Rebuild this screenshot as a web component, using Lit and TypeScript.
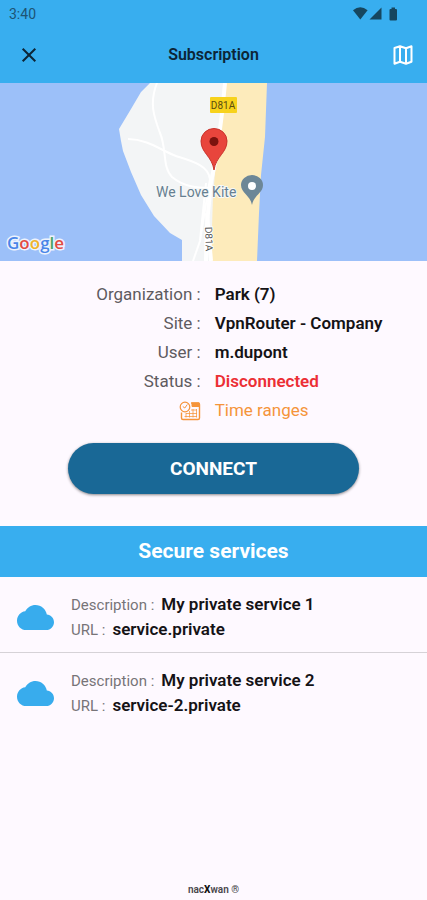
import { LitElement, html, css, svg } from "lit";
import { customElement, property } from "lit/decorators.js";

@customElement("status-bar")
class StatusBar extends LitElement {
  static styles = css`
    :host { display: flex; align-items: center; justify-content: space-between; height: 27px; padding: 0 27px 0 9px; color: #1d5474; font-size: 14px; }
    svg { display: block; width: 48px; height: 16px; }
  `;
  render() {
    return html`<span>3:40</span>
      <svg viewBox="0 0 48 16" fill="#16465f" aria-hidden="true">
        <path d="M1 4.200Q8.300 -1.600 15.600 4.200L8.300 13.600Z" />
        <path d="M29.500 1.600V13.600H17.500Z" />
        <path d="M39.500 1.500h3.500v1.500h1q1 0 1 1v9.500q0 1-1 1h-5.500q-1 0-1-1V4q0-1 1-1h1z" />
      </svg>`;
  }
}

@customElement("site-map")
class SiteMap extends LitElement {
  static styles = css`
    :host { display: block; position: relative; height: 178px; overflow: hidden; background: #9cc0f9; }
    .canvas { display: block; width: 100%; height: 100%; }
    .label { font-family: Roboto, sans-serif; }
    .brand { position: absolute; left: 7px; bottom: 6px; font: 600 17px/24px "Open Sans", sans-serif; paint-order: stroke fill; -webkit-text-stroke: 3px #edf3fd; }
    .b { color: #4a86e8; }
    .r { color: #e34a42; }
    .y { color: #f0b429; }
    .g { color: #4aa564; }
  `;
  render() {
    return html`
      <svg class="canvas" viewBox="0 0 427 178" preserveAspectRatio="xMidYMid slice" role="img" aria-label="Map of the site">
        ${svg`
          <path fill="#f3f5f6" d="M150 0L141 9L131 26L119 46L121 58L123 68L131 89L141 112L154 133L170 150L182 157V178H225V0Z" />
          <path fill="#fdebbb" d="M225 0H267L265 54L261 92L259 130L257 178H211L213 112L216 80L222 40Z" />
          <g fill="none" stroke="#fff">
            <path stroke-width="2" d="M157 0C149 20 154 34 160 50C167 66 162 84 172 94C184 104 198 105 210 105" />
            <path stroke-width="2" d="M128 56C148 56 162 68 176 73C192 78 208 82 210 96M210 96L200 158L193 178M206 100L200 157" />
            <path stroke-width="4" d="M225 0L222 30L217 70L211 99L207 140L206 178" />
            <path stroke-width="4" d="M207 130L211 178" />
          </g>
          <rect x="210" y="14" width="27" height="16" rx="1" fill="#f7d21c" />
          <text class="label" x="223" y="26" text-anchor="middle" font-size="10" fill="#5a4c10">D81A</text>
          <text class="label" x="156" y="114" font-size="14" fill="#657f91" stroke="#f7f8f8" stroke-width="2" paint-order="stroke">We Love Kite</text>
          <text class="label" transform="translate(205 144) rotate(88)" font-size="10" fill="#555" stroke="#fff" stroke-width="2" paint-order="stroke">D81A</text>
          <path fill="#6d8797" d="M252 122C250 112 241 110 241 102A11 10 0 0 1 263 102C263 110 254 112 252 122Z" />
          <circle cx="252" cy="103" r="4" fill="#fff" />
          <path fill="#e8453c" stroke="#c9322b" stroke-width="1" d="M214 87C212 73 201 70 201 58A13 12.500 0 0 1 227 58C227 70 216 73 214 87Z" />
          <circle cx="214" cy="58.500" r="4.500" fill="#7b120e" />
        `}
      </svg>
      <span class="brand"><span class="b">G</span><span class="r">o</span><span class="y">o</span><span class="b">g</span><span class="g">l</span><span class="r">e</span></span>`;
  }
}

@customElement("service-item")
class ServiceItem extends LitElement {
  @property() name = "";
  @property() url = "";
  static styles = css`
    :host { display: flex; align-items: center; gap: 17px; padding: 15px 17px 11px; }
    .cloud { flex: none; width: 37px; height: 25px; }
    dl { margin: 0; }
    .row { display: flex; align-items: baseline; gap: 7px; height: 25px; line-height: 24px; }
    dt { font-size: 15px; color: #777478; }
    dd { margin: 0; font-size: 17px; font-weight: 600; color: #151316; }
  `;
  render() {
    return html`
      <svg class="cloud" viewBox="0 4 24 16" preserveAspectRatio="none" fill="#38aced" aria-hidden="true">
        <path d="M19.350 10.040C18.670 6.590 15.640 4 12 4 9.110 4 6.600 5.640 5.350 8.040 2.340 8.360 0 10.910 0 14c0 3.310 2.690 6 6 6h13c2.760 0 5-2.240 5-5 0-2.640-2.050-4.780-4.650-4.960z" />
      </svg>
      <dl>
        <div class="row"><dt>Description :</dt><dd>${this.name}</dd></div>
        <div class="row"><dt>URL :</dt><dd>${this.url}</dd></div>
      </dl>`;
  }
}

@customElement("app-root")
class AppRoot extends LitElement {
  static styles = css`
    :host { display: flex; flex-direction: column; min-height: 100vh; background: #fef9ff; font-family: Roboto, sans-serif; color: #151316; }
    header { background: #38aeef; }
    .bar { display: grid; grid-template-columns: 58px 1fr 58px; align-items: center; height: 56px; }
    h1 { margin: 0; text-align: center; font-size: 16px; line-height: 24px; font-weight: 600; color: #0c2536; }
    button { border: 0; font-family: inherit; cursor: pointer; }
    .icon { display: grid; place-items: center; height: 48px; padding: 0; background: none; }
    .icon svg { width: 24px; height: 24px; }
    .map { justify-items: end; padding-right: 12px; }
    .info { display: flex; flex-direction: column; margin: 0; padding: 19px 0 18px; font-size: 17px; line-height: 29px; }
    .pair { display: grid; grid-template-columns: 47% 1fr; column-gap: 14px; }
    dt { text-align: right; color: #5e5b60; }
    dd { margin: 0; font-weight: 600; }
    .off { color: #ec2f35; }
    .ranges { color: #f5943a; text-decoration: none; }
    .ranges svg { display: block; justify-self: end; align-self: center; width: 22px; height: 20px; }
    .connect { align-self: center; width: 68%; height: 51px; border-radius: 26px; background: #196896; color: #fff; font-size: 19px; font-weight: 700; box-shadow: 0 1px 3px #0007; }
    h2 { margin: 32px 0 0; background: #38aeef; color: #fff; text-align: center; font-size: 21px; line-height: 51px; font-weight: 700; }
    ul { margin: 0; padding: 0; list-style: none; }
    li + li { border-top: 1px solid #d6d2d7; }
    service-item { margin-bottom: -1px; }
    footer { margin-top: auto; padding: 0 0 3px; text-align: center; font-size: 10px; line-height: 14px; font-weight: 600; color: #4a474b; }
    footer b { color: #111; font-weight: 800; }
  `;

  services = [
    { name: "My private service 1", url: "service.private" },
    { name: "My private service 2", url: "service-2.private" },
  ];

  render() {
    return html`
      <header>
        <status-bar></status-bar>
        <div class="bar">
          <button class="icon" aria-label="Close">
            <svg viewBox="0 0 24 24" fill="none" stroke="#0c2536" stroke-width="2"><path d="M5.700 5.700L18.300 18.300M18.300 5.700L5.700 18.300" /></svg>
          </button>
          <h1>Subscription</h1>
          <button class="icon map" aria-label="Map">
            <svg viewBox="0 0 24 24" fill="none" stroke="#fff" stroke-width="2" stroke-linejoin="round">
              <path d="M3.500 5L9 3.300L15 5.300L20.500 3.300V18.700L15 20.700L9 18.700L3.500 20.700ZM9 3.300V18.700M15 5.300V20.700" />
            </svg>
          </button>
        </div>
      </header>
      <site-map></site-map>
      <dl class="info">
        <div class="pair"><dt>Organization :</dt><dd>Park (7)</dd></div>
        <div class="pair"><dt>Site :</dt><dd>VpnRouter - Company</dd></div>
        <div class="pair"><dt>User :</dt><dd>m.dupont</dd></div>
        <div class="pair"><dt>Status :</dt><dd class="off">Disconnected</dd></div>
        <a class="pair ranges" href="#ranges">
          <svg viewBox="0 0 22 20" fill="none" stroke="#f5943a" aria-hidden="true">
            <path d="M12 2H19.500Q20.500 2 20.500 3.500V17Q20.500 18.500 19 18.500H4Q2.500 18.500 2.500 17V11.500" stroke-width="1.400" />
            <path d="M13 2H20V5.500H13Z" fill="#f5943a" />
            <circle cx="6" cy="6" r="4.800" stroke-width="1.200" />
            <path d="M3.800 5.500L5.800 7L8.300 3.500" />
            <path d="M12 9H18M7 12.500H18M5.500 15.500H18M10.500 10V16.500M14 8V16.500M17.500 8V16.500M7 12V16.500" stroke-opacity=".75" />
          </svg>
          <span>Time ranges</span>
        </a>
      </dl>
      <button class="connect">CONNECT</button>
      <h2>Secure services</h2>
      <ul>
        ${this.services.map((s) => html`<li><service-item .name=${s.name} .url=${s.url}></service-item></li>`)}
      </ul>
      <footer>nac<b>X</b>wan ®</footer>`;
  }
}
